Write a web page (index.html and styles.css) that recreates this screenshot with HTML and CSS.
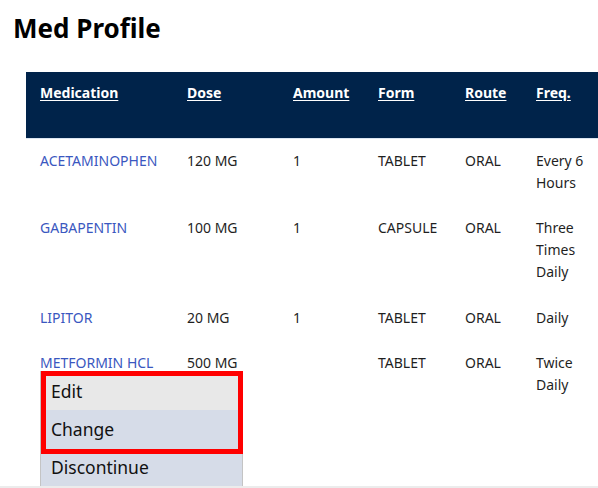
FILE: index.html
```html
<!DOCTYPE html>
<html>
<head>
<meta charset="utf-8">
<link rel="stylesheet" href="styles.css">
</head>
<body>
<div class="page">
  <h1 class="title">Med Profile</h1>
  <table class="meds">
    <colgroup>
      <col class="c-med"><col class="c-dose"><col class="c-amt"><col class="c-form"><col class="c-route"><col class="c-freq">
    </colgroup>
    <thead>
      <tr>
        <th><a>Medication</a></th>
        <th><a>Dose</a></th>
        <th><a>Amount</a></th>
        <th><a>Form</a></th>
        <th><a>Route</a></th>
        <th><a>Freq.</a></th>
      </tr>
    </thead>
    <tbody>
      <tr>
        <td class="name">ACETAMINOPHEN</td><td>120 MG</td><td>1</td><td>TABLET</td><td>ORAL</td><td>Every 6 Hours</td>
      </tr>
      <tr>
        <td class="name">GABAPENTIN</td><td>100 MG</td><td>1</td><td>CAPSULE</td><td>ORAL</td><td>Three Times Daily</td>
      </tr>
      <tr>
        <td class="name">LIPITOR</td><td>20 MG</td><td>1</td><td>TABLET</td><td>ORAL</td><td>Daily</td>
      </tr>
      <tr>
        <td class="name">METFORMIN HCL</td><td>500 MG</td><td></td><td>TABLET</td><td>ORAL</td><td>Twice Daily</td>
      </tr>
    </tbody>
  </table>
  <ul class="menu">
    <li class="item item-edit">Edit</li>
    <li class="item item-alt">Change</li>
    <li class="item item-alt">Discontinue</li>
  </ul>
  <div class="highlight"></div>
  <div class="bottom-line"></div>
</div>
</body>
</html>
```

FILE: styles.css
```css
html, body {
  margin: 0;
  padding: 0;
  background: #ffffff;
  overflow: hidden;
}
body {
  font-family: "Noto Sans", "Open Sans", sans-serif;
  color: #1f1f1f;
  width: 598px;
  height: 488px;
}
.page {
  position: relative;
  width: 598px;
  height: 488px;
  overflow: hidden;
}
.title {
  margin: 0;
  padding: 11px 13px 0;
  font-size: 26px;
  line-height: 34px;
  font-weight: 700;
  color: #000;
}
.meds {
  margin: 27px 0 0 26px;
  border-collapse: collapse;
  table-layout: fixed;
  width: 580px;
  font-size: 14px;
  line-height: 22px;
}
.c-med { width: 147px; }
.c-dose { width: 106px; }
.c-amt { width: 85px; }
.c-form { width: 87px; }
.c-route { width: 71px; }
.c-freq { width: 84px; }
.meds th {
  background: #00234a;
  color: #fff;
  text-align: left;
  vertical-align: top;
  font-weight: 700;
  height: 66px;
  box-sizing: border-box;
  padding: 10px 10px 0 14px;
  border-bottom: 1px solid #dbe6f2;
}
.meds th a {
  text-decoration: underline;
  text-underline-offset: 2px;
}
.meds td {
  vertical-align: top;
  padding: 11.3px 10px 12.3px 14px;
}
.meds tbody tr:first-child td {
  padding-top: 11px;
}
.meds td.name {
  color: #3a57c0;
}
.menu {
  position: absolute;
  left: 40px;
  top: 371px;
  width: 203px;
  margin: 0;
  padding: 0;
  list-style: none;
  box-sizing: border-box;
  border: 1px solid #c4c4c4;
  font-size: 17.5px;
  color: #111;
}
.item {
  height: 38px;
  line-height: 38px;
  padding-left: 10px;
}
.item-edit { background: #e8e8e8; }
.item-alt { background: #d6dce8; }
.highlight {
  position: absolute;
  left: 41px;
  top: 371px;
  width: 202px;
  height: 83px;
  box-sizing: border-box;
  border: 5px solid #ff0000;
}
.bottom-line {
  position: absolute;
  left: 0;
  right: 0;
  top: 486px;
  height: 2px;
  background: #ececec;
}
```
